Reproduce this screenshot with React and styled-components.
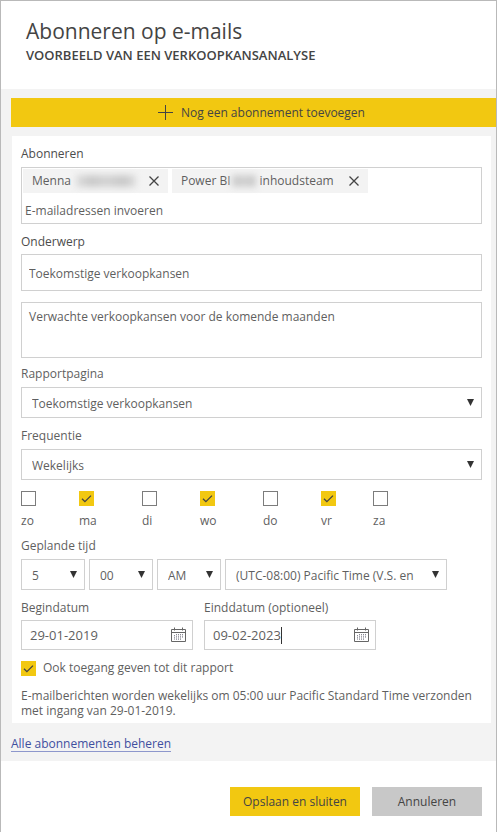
import React, { useState } from "react";
import styled, { createGlobalStyle, css } from "styled-components";

const GlobalStyle = createGlobalStyle`
  *, *::before, *::after { box-sizing: border-box; }
  body { margin: 0; background: #fff; }
  body, button, input, select, textarea {
    font-family: "Open Sans", "Noto Sans", sans-serif;
    font-size: 12px;
    line-height: 18px;
    color: #5f5f5f;
  }
  button, input, select, textarea { margin: 0; border-radius: 0; }
`;

const Dialog = styled.form`
  display: flex;
  flex-direction: column;
  min-height: 100vh;
  border: 1px solid #b9b9b9;
  background: #fff;
`;

const Header = styled.header`
  padding: 15px 25px 25px;
  color: #444;
`;

const Title = styled.h1`
  margin: 0;
  font-size: 21px;
  line-height: 30px;
  font-weight: 400;
`;

const Subtitle = styled.h2`
  margin: 0;
  font-size: 13px;
  line-height: 18px;
  font-weight: 600;
  text-transform: uppercase;
`;

const Body = styled.main`
  padding: 9px 0 9px 10px;
  background: #f3f3f3;
`;

const AddButton = styled.button`
  display: flex;
  align-items: center;
  justify-content: center;
  gap: 8px;
  width: 100%;
  height: 29px;
  padding: 0 0 0 16px;
  border: 0;
  background: #f2c811;
  color: #444;
`;

const Card = styled.section`
  margin: 9px 5px 13px 1px;
  padding: 9px 9px 5px;
  background: #fff;
`;

const Label = styled.label`
  display: block;
  line-height: 18px;
  color: ${(p) => (p.$strong ? "#4c4c4c" : "#5f5f5f")};
`;

const Field = styled.div`
  display: flex;
  flex-direction: column;
  gap: ${(p) => p.$gap || 4}px;
  margin-bottom: ${(p) => p.$after || 9}px;
  min-width: 0;
`;

const boxed = css`
  border: 1px solid #d0d0d0;
  background: #fff;
  outline: 0;
`;

const Recipients = styled.div`
  ${boxed}
  padding: 1px;
`;

const Chips = styled.div`
  display: flex;
  flex-wrap: wrap;
  gap: 4px;
`;

const Chip = styled.span`
  display: flex;
  align-items: center;
  height: 24px;
  padding: 0 8px 0 9px;
  background: #f3f3f3;
`;

const Redacted = styled.span`
  width: ${(p) => p.$width}px;
  height: 12px;
  margin: 0 ${(p) => p.$after}px 0 ${(p) => p.$before}px;
  background: linear-gradient(90deg, #dedede, #c9c9c9 25%, #d3d3d3 50%, #c8c8c8 80%, #dedede);
  filter: blur(3px);
`;

const RemoveButton = styled.button`
  display: flex;
  margin-left: ${(p) => p.$gap}px;
  padding: 0;
  border: 0;
  background: none;
  color: #444;
`;

const PlainInput = styled.input`
  display: block;
  width: 100%;
  height: 29px;
  padding: 5px 2px 0;
  border: 0;
  outline: 0;
  background: none;
  &::placeholder { color: #5f5f5f; opacity: 1; }
`;

const TextInput = styled.input`
  ${boxed}
  width: 100%;
  height: 37px;
  padding: 2px 7px 0;
`;

const TextArea = styled.textarea`
  ${boxed}
  display: block;
  width: 100%;
  height: 56px;
  padding: 5px 7px;
  resize: none;
`;

const SelectBox = styled.div`
  position: relative;
  ${(p) => (p.$wide ? "flex: 0 1 222px;" : p.$small ? "flex: 0 0 64px;" : "")}
  min-width: 0;
`;

const NativeSelect = styled.select`
  ${boxed}
  display: block;
  width: 100%;
  height: 31px;
  padding: 3px ${(p) => (p.$small ? 16 : 24)}px 0 10px;
  appearance: none;
`;

const Arrow = styled.svg`
  position: absolute;
  top: 12px;
  right: 8px;
  pointer-events: none;
`;

const Days = styled.fieldset`
  display: grid;
  grid-template-columns: 58fr 63fr 58fr 63fr 58fr 52fr 109fr;
  margin: 0 0 7px;
  padding: 0;
  border: 0;
`;

const Day = styled.label`
  display: flex;
  flex-direction: column;
  gap: 6px;
`;

const Check = styled.span`
  position: relative;
  display: block;
  width: 15px;
  height: 15px;
  svg { position: absolute; inset: 0; pointer-events: none; }
  input:not(:checked) + svg { display: none; }
`;

const CheckInput = styled.input`
  display: block;
  width: 15px;
  height: 15px;
  appearance: none;
  border: 1px solid #7c7c7c;
  background: #fff;
  &:checked { border-color: #f2c811; background: #f2c811; }
`;

const TimeRow = styled.div`
  display: flex;
  gap: 4px;
`;

const DateRow = styled.div`
  display: flex;
  gap: 11px;
`;

const DateField = styled.div`
  display: flex;
  flex: 0 1 172px;
  flex-direction: column;
  gap: 3px;
  min-width: 0;
`;

const DateBox = styled.div`
  ${boxed}
  display: flex;
  align-items: center;
  height: 30px;
  padding: 0 5px 0 8px;
`;

const DateInput = styled.input`
  field-sizing: content;
  padding: 0;
  border: 0;
  outline: 0;
  background: none;
  font-size: 13px;
`;

const Caret = styled.span`
  width: 1px;
  height: 17px;
  background: #333;
`;

const CalendarButton = styled.button`
  display: flex;
  margin-left: auto;
  padding: 0;
  border: 0;
  background: none;
`;

const Access = styled.label`
  display: flex;
  align-items: center;
  gap: 7px;
  margin: 9px 0 11px;
`;

const Summary = styled.p`
  margin: 0;
  line-height: 15px;
`;

const ManageLink = styled.a`
  display: block;
  width: fit-content;
  border-bottom: 1px solid #8d97cc;
  line-height: 15px;
  color: #3f4f9f;
  text-decoration: none;
`;

const Footer = styled.footer`
  display: flex;
  justify-content: flex-end;
  gap: 12px;
  padding: 26px 14px 16px;
`;

const ActionButton = styled.button`
  width: ${(p) => (p.$primary ? 130 : 110)}px;
  height: 29px;
  padding: 0;
  border: 0;
  background: ${(p) => (p.$primary ? "#f2c811" : "#c8c8c8")};
  color: #444;
`;

function Remove({ name, gap }) {
  return (
    <RemoveButton type="button" aria-label={`${name} verwijderen`} $gap={gap}>
      <svg width="12" height="12" viewBox="0 0 12 12" fill="none" stroke="currentColor" strokeWidth="1.3">
        <path d="M1.5 1.5l9 9M10.5 1.5l-9 9" />
      </svg>
    </RemoveButton>
  );
}

function Select({ id, label, options, wide, small }) {
  return (
    <SelectBox $wide={wide} $small={small}>
      <NativeSelect id={id} aria-label={label} $small={small}>
        {options.map((o) => <option key={o}>{o}</option>)}
      </NativeSelect>
      <Arrow width="7" height="7" viewBox="0 0 7 7" aria-hidden="true">
        <path d="M0 0h7L3.5 7z" fill="#333" />
      </Arrow>
    </SelectBox>
  );
}

function Checkbox({ initial }) {
  const [on, setOn] = useState(initial);
  return (
    <Check>
      <CheckInput type="checkbox" checked={on} onChange={(e) => setOn(e.target.checked)} />
      <svg width="15" height="15" viewBox="0 0 15 15" fill="none" stroke="#444" strokeWidth="1.3">
        <path d="M3 7.8l2.9 2.9L12 4.6" />
      </svg>
    </Check>
  );
}

function Calendar({ label }) {
  return (
    <CalendarButton type="button" aria-label={label}>
      <svg width="17" height="16" viewBox="0 0 17 16" fill="none" stroke="#666" strokeWidth="1">
        <path d="M1.5 2.5h14v12h-14zM1.5 5.5h14M4.5 .5v3M12.5 .5v3" />
        <path d="M4.5 8v5M6.5 7v6M8.5 7v6M10.5 7v6M12.5 7v4" stroke="#8b8b96" strokeDasharray="1.4 .8" />
      </svg>
    </CalendarButton>
  );
}

const days = [["zo", false], ["ma", true], ["di", false], ["wo", true], ["do", false], ["vr", true], ["za", false]];

export default function App() {
  return (
    <>
      <GlobalStyle />
      <Dialog onSubmit={(e) => e.preventDefault()}>
        <Header>
          <Title>Abonneren op e-mails</Title>
          <Subtitle>Voorbeeld van een verkoopkansanalyse</Subtitle>
        </Header>
        <Body>
          <AddButton type="button">
            <svg width="15" height="15" viewBox="0 0 15 15" stroke="#444" strokeWidth="1" aria-hidden="true">
              <path d="M7.5 0v15M0 7.5h15" />
            </svg>
            Nog een abonnement toevoegen
          </AddButton>
          <Card>
            <Field>
              <Label htmlFor="recipients" $strong>Abonneren</Label>
              <Recipients>
                <Chips>
                  <Chip>
                    Menna
                    <Redacted $width={60} $before={5} $after={0} aria-hidden="true" />
                    <Remove name="Menna" gap={12} />
                  </Chip>
                  <Chip>
                    Power BI
                    <Redacted $width={26} $before={0} $after={3} aria-hidden="true" />
                    inhoudsteam
                    <Remove name="Power BI inhoudsteam" gap={14} />
                  </Chip>
                </Chips>
                <PlainInput id="recipients" placeholder="E-mailadressen invoeren" />
              </Recipients>
            </Field>
            <Field $gap={3} $after={11}>
              <Label htmlFor="subject" $strong>Onderwerp</Label>
              <TextInput id="subject" defaultValue="Toekomstige verkoopkansen" />
            </Field>
            <Field $after={7}>
              <TextArea aria-label="Bericht" defaultValue="Verwachte verkoopkansen voor de komende maanden" />
            </Field>
            <Field>
              <Label htmlFor="page">Rapportpagina</Label>
              <Select id="page" options={["Toekomstige verkoopkansen"]} />
            </Field>
            <Field $after={11}>
              <Label htmlFor="frequency">Frequentie</Label>
              <Select id="frequency" options={["Wekelijks"]} />
            </Field>
            <Days aria-label="Dagen">
              {days.map(([name, on]) => (
                <Day key={name}>
                  <Checkbox initial={on} />
                  {name}
                </Day>
              ))}
            </Days>
            <Field>
              <Label htmlFor="hour">Geplande tijd</Label>
              <TimeRow>
                <Select id="hour" small options={["5"]} />
                <Select label="Minuten" small options={["00"]} />
                <Select label="Dagdeel" small options={["AM", "PM"]} />
                <Select label="Tijdzone" wide options={["(UTC-08:00) Pacific Time (V.S. en"]} />
              </TimeRow>
            </Field>
            <DateRow>
              <DateField>
                <Label htmlFor="start">Begindatum</Label>
                <DateBox>
                  <DateInput id="start" defaultValue="29-01-2019" />
                  <Calendar label="Begindatum kiezen" />
                </DateBox>
              </DateField>
              <DateField>
                <Label htmlFor="end">Einddatum (optioneel)</Label>
                <DateBox>
                  <DateInput id="end" defaultValue="09-02-2023" />
                  <Caret />
                  <Calendar label="Einddatum kiezen" />
                </DateBox>
              </DateField>
            </DateRow>
            <Access>
              <Checkbox initial />
              Ook toegang geven tot dit rapport
            </Access>
            <Summary>
              E-mailberichten worden wekelijks om 05:00 uur Pacific Standard Time verzonden met ingang van 29-01-2019.
            </Summary>
          </Card>
          <ManageLink href="#abonnementen">Alle abonnementen beheren</ManageLink>
        </Body>
        <Footer>
          <ActionButton type="submit" $primary>Opslaan en sluiten</ActionButton>
          <ActionButton type="button">Annuleren</ActionButton>
        </Footer>
      </Dialog>
    </>
  );
}
